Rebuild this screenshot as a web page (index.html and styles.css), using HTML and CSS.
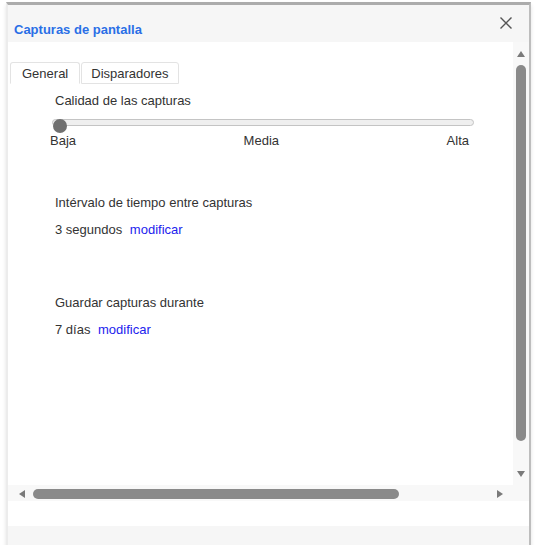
FILE: index.html
```html
<!DOCTYPE html>
<html lang="es">
<head>
    <meta charset="UTF-8">
    <title>Capturas de pantalla</title>
    <link rel="stylesheet" href="styles.css">
</head>
<body>
    <div class="dialog">
        <div class="header">
            <div class="title">Capturas de pantalla</div>
            <svg class="close" width="14" height="14" viewBox="0 0 14 14">
                <path d="M1.5 1.5 L12.5 12.5 M12.5 1.5 L1.5 12.5" stroke="#555" stroke-width="1.4" fill="none"/>
            </svg>
        </div>

        <div class="pane">
            <div class="content">
                <div class="tabs">
                    <div class="tab active">General</div>
                    <div class="tab">Disparadores</div>
                </div>

                <div class="section quality">
                    <div class="label">Calidad de las capturas</div>
                    <div class="slider">
                        <div class="track"></div>
                        <div class="thumb"></div>
                    </div>
                    <div class="ticks">
                        <span>Baja</span>
                        <span>Media</span>
                        <span>Alta</span>
                    </div>
                </div>

                <div class="section interval">
                    <div class="label">Intérvalo de tiempo entre capturas</div>
                    <div class="value">3 segundos <a href="#" class="modify">modificar</a></div>
                </div>

                <div class="section keep">
                    <div class="label">Guardar capturas durante</div>
                    <div class="value">7 días <a href="#" class="modify">modificar</a></div>
                </div>
            </div>

            <div class="vscroll">
                <span class="arrow up"></span>
                <div class="vthumb"></div>
                <span class="arrow down"></span>
            </div>

            <div class="hscroll">
                <span class="arrow left"></span>
                <div class="hthumb"></div>
                <span class="arrow right"></span>
            </div>
            <div class="corner"></div>
        </div>

        <div class="spacer"></div>
        <div class="footer"></div>
    </div>
</body>
</html>
```

FILE: styles.css
```css
body {
    margin: 0;
    background: #fff;
    font-family: "Liberation Sans", Arial, sans-serif;
    color: #333;
}
.dialog {
    margin: 2px 0 0 6px;
    width: 521px;
    height: 540px;
    border-top: 3px solid #acacac;
    border-left: 2px solid #ececec;
    border-right: 2px solid #bdbdbd;
    box-shadow: 0 3px 4px rgba(0, 0, 0, 0.12);
    display: flex;
    flex-direction: column;
    background: #fff;
}
.header {
    height: 37px;
    background: #f6f6f6;
    display: flex;
    align-items: center;
    justify-content: space-between;
    padding: 0 16px 0 6px;
}
.title {
    color: #2a6fe6;
    font-weight: bold;
    font-size: 13px;
    margin-top: 11px;
}
.close {
    margin-top: -2px;
}
.pane {
    flex: 1;
    display: grid;
    grid-template-columns: 1fr 16px;
    grid-template-rows: 1fr 16px;
}
.content {
    padding: 20px 0 0 2px;
    font-size: 13px;
}
.tabs {
    display: flex;
    height: 22px;
}
.tab {
    padding: 0 9px;
    line-height: 21px;
    border: 1px solid #e3e3e3;
    border-radius: 3px 3px 0 0;
    color: #333;
}
.tab.active {
    padding: 0 11px;
    border-bottom-color: #fff;
}
.tab + .tab {
    margin-left: 1px;
}
.section {
    padding-left: 45px;
}
.quality {
    margin-top: 8px;
}
.label {
    line-height: 18px;
}
.slider {
    position: relative;
    margin: 9px 0 0 -3px;
    width: 422px;
    height: 14px;
}
.track {
    margin-top: 4px;
    height: 5px;
    border: 1px solid #c4c4c4;
    border-radius: 4px;
    background: #efefef;
}
.thumb {
    position: absolute;
    left: 1px;
    top: 0;
    width: 14px;
    height: 14px;
    border-radius: 50%;
    background: #707070;
}
.ticks {
    display: flex;
    justify-content: space-between;
    width: 419px;
    margin-left: -5px;
    line-height: 16px;
}
.interval {
    margin-top: 45px;
}
.keep {
    margin-top: 55px;
}
.value {
    margin-top: 9px;
    line-height: 18px;
}
.modify {
    color: #2222ee;
    text-decoration: none;
    margin-left: 4px;
}
.vscroll {
    background: #f8f8f8;
    display: flex;
    flex-direction: column;
    align-items: center;
    padding: 9px 0 6px;
}
.vthumb {
    width: 10px;
    height: 376px;
    margin: 8px 0 30px;
    border-radius: 5px;
    background: #8a8a8a;
}
.hscroll {
    background: #f8f8f8;
    display: flex;
    align-items: center;
    padding: 1px 0 0 11px;
}
.hthumb {
    width: 366px;
    height: 10px;
    margin: 0 98px 0 8px;
    border-radius: 5px;
    background: #8a8a8a;
}
.corner {
    background: #f8f8f8;
}
.arrow {
    width: 0;
    height: 0;
    border: 4px solid transparent;
}
.arrow.up {
    border-bottom: 6px solid #7a7a7a;
    border-top: 0;
}
.arrow.down {
    border-top: 6px solid #7a7a7a;
    border-bottom: 0;
}
.arrow.left {
    border-right: 6px solid #7a7a7a;
    border-left: 0;
}
.arrow.right {
    border-left: 6px solid #7a7a7a;
    border-right: 0;
}
.spacer {
    height: 25px;
}
.footer {
    height: 19px;
    background: #f6f6f6;
}
```
